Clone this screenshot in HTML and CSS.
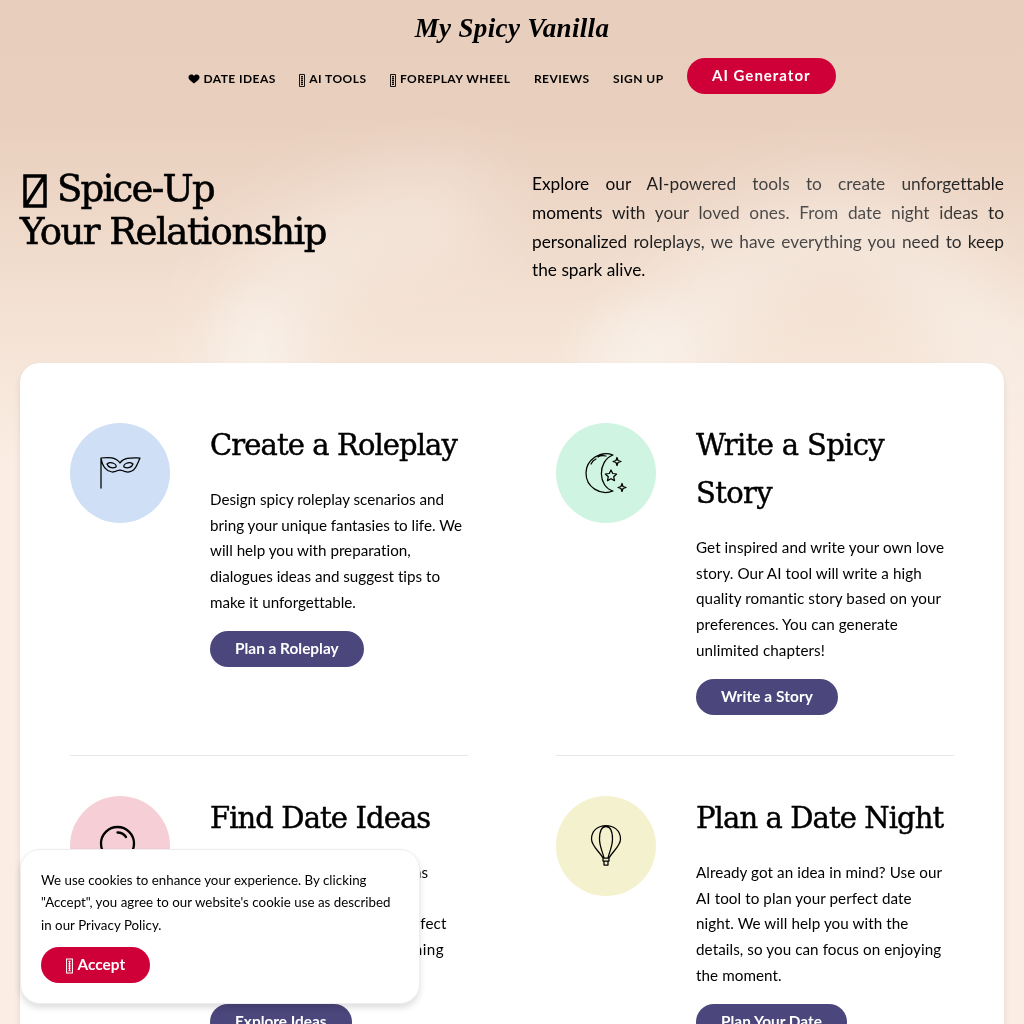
FILE: index.html
```html
<!DOCTYPE html>
<html lang="en">
<head>
<meta charset="utf-8">
<title>My Spicy Vanilla</title>
<link rel="stylesheet" href="styles.css">
</head>
<body>
<svg class="defs" width="0" height="0" aria-hidden="true">
  <symbol id="glyph" viewBox="0 0 6 13"><path d="M.5.5h5v12h-5zM2 2.5h2M2 4.5h2M2 6.5h2M2 8.5h2M2 10.5h2M3 2v9" fill="none" stroke="currentColor" stroke-width=".9"/></symbol>
</svg>
<header class="site-header">
  <a class="logo">My Spicy Vanilla</a>
  <nav class="nav">
    <a><svg class="heart" viewBox="0 0 12 10"><path d="M6 9.500C3.500 7.200.5 6 .5 3.200.5.3 4.500-.3 6 2.100 7.500-.3 11.500.3 11.500 3.200 11.500 6 8.500 7.200 6 9.500z"/></svg>DATE IDEAS</a>
    <a><svg class="glyph"><use href="#glyph"/></svg>AI TOOLS</a>
    <a><svg class="glyph"><use href="#glyph"/></svg>FOREPLAY WHEEL</a>
    <a>REVIEWS</a>
    <a>SIGN UP</a>
    <a class="button red nav-button">AI Generator</a>
  </nav>
</header>
<section class="hero">
  <svg class="haze" viewBox="0 0 1024 500" aria-hidden="true">
    <defs><filter id="soft" x="-50%" y="-50%" width="200%" height="200%"><feGaussianBlur stdDeviation="34"/></filter>
    <filter id="fine" x="-80%" y="-50%" width="260%" height="200%"><feGaussianBlur stdDeviation="20"/></filter></defs>
    <g fill="none" stroke="#fff" filter="url(#soft)">
      <path d="M250 400C245 280 330 220 480 205" stroke-width="95" opacity=".3"/>
      <path d="M620 400C690 320 740 235 840 225C900 230 960 300 1050 400" stroke-width="85" opacity=".32"/>
    </g>
    <g fill="#fff" filter="url(#fine)"><ellipse cx="258" cy="355" rx="35" ry="60" opacity=".22"/><ellipse cx="640" cy="355" rx="60" ry="55" opacity=".2"/></g>
  </svg>
  <h1><svg class="missing" viewBox="0 0 24 34"><path d="M2 2h20v30H2zM3 31L21 3" fill="none" stroke="#000" stroke-width="3.500"/></svg><span class="t1">Spice-Up</span><br><span class="t2">Your Relationship</span></h1>
  <p>Explore our AI-powered tools to create unforgettable moments with your loved ones. From date night ideas to personalized roleplays, we have everything you need to keep the spark alive.</p>
</section>
<main class="panel">
  <article class="tool">
    <div class="icon blue"><svg viewBox="0 0 100 100"><path d="M31 35V65M31 35C39 34 46 34 50 40C54 34 62 35 70 35C67 42 65 49 58 49C53 49 53 47 50 47C47 47 47 49 42 49C35 48 32 42 31 35zM37 41C41 38 47 41 46 44C42 46 38 44 37 41zM63 41C59 38 53 41 54 44C58 46 62 44 63 41z"/></svg></div>
    <div class="body"><h2>Create a Roleplay</h2>
      <p>Design spicy roleplay scenarios and<br>bring your unique fantasies to life. We<br>will help you with preparation,<br>dialogues ideas and suggest tips to<br>make it unforgettable.</p>
      <a class="button">Plan a Roleplay</a></div>
  </article>
  <article class="tool">
    <div class="icon green"><svg viewBox="0 0 100 100"><path d="M57 32C44 27 30 37 30 50C30 64 44 73 57 68C42 64 41 38 57 32zM35 41Q37 37 40 36M42 34Q45 32 50 33M55 47l1.700 3.500 3.900.5-2.900 2.700.8 3.900-3.500-1.900-3.500 1.900.8-3.900-2.900-2.700 3.900-.5zM61 34.500l1 3 3 1-3 1-1 3-1-3-3-1 3-1zM66 60.500l1 3 3 1-3 1-1 3-1-3-3-1 3-1z"/></svg></div>
    <div class="body wide"><h2 class="loose">Write a Spicy<br>Story</h2>
      <p>Get inspired and write your own love<br>story. Our AI tool will write a high<br>quality romantic story based on your<br>preferences. You can generate<br>unlimited chapters!</p>
      <a class="button story">Write a Story</a></div>
  </article>
  <article class="tool">
    <div class="icon pink"><svg class="bold" viewBox="0 0 100 100"><circle cx="47.500" cy="47.500" r="16.500"/><path d="M47.500 36.500Q53 36.500 56 41M59 60L70 71"/></svg></div>
    <div class="body"><h2>Find Date Ideas</h2>
      <p><span class="snug">Looking for new date inspirations</span><br>to try? Answer a few<br><span class="airy">questions and get the most perfect</span><br><span class="airy">date ideas for a romantic evening</span><br>together.</p>
      <a class="button">Explore Ideas</a></div>
  </article>
  <article class="tool">
    <div class="icon yellow"><svg viewBox="0 0 100 100"><path d="M47 62C43 55 35.500 50 35.500 43C35.500 25 64.500 25 64.500 43C64.500 50 57 55 53 62zM48 62C46 54 43.500 50 43.500 43C43.500 35 46 30.500 50 30.500S56.500 35 56.500 43C56.500 50 54 54 52 62M47 62h6v3h-6zM48 65v4h4v-4M48 69h4"/></svg></div>
    <div class="body wide"><h2>Plan a Date Night</h2>
      <p>Already got an idea in mind? Use our<br>AI tool to plan your perfect date<br>night. We will help you with the<br>details, so you can focus on enjoying<br>the moment.</p>
      <a class="button">Plan Your Date</a></div>
  </article>
</main>
<aside class="cookie">
  <p>We use cookies to enhance your experience. By clicking<br>"Accept", you agree to our website's cookie use as described<br>in our Privacy Policy.</p>
  <a class="button red"><svg class="glyph"><use href="#glyph"/></svg>Accept</a>
</aside>
</body>
</html>
```
FILE: styles.css
```css
* { box-sizing: border-box; }
html { height: 100%; overflow: hidden; }
body {
  margin: 0; height: 1024px; overflow: hidden; position: relative;
  font-family: Lato, sans-serif; color: #000; font-variant-ligatures: none;
  background: linear-gradient(#e8cebc 0, #e9cfbd 120px, #f4e3d5 330px, #fbede3 460px, #fbede3);
}
.defs { position: absolute; }
h1, h2, p { margin: 0; font-weight: 400; }
.site-header { height: 110px; display: flex; flex-direction: column; align-items: center; }
.logo {
  height: 58px; white-space: nowrap;
  font: italic 700 27px/56px "Liberation Serif", serif; letter-spacing: .35px;
}
.nav { display: flex; align-items: center; gap: 23.500px; height: 36px; }
.nav > a { font-size: 12px; font-weight: 700; letter-spacing: .45px; white-space: nowrap; padding-top: 5px; display: flex; align-items: center; }
.heart { width: 12px; height: 10px; margin-right: 3px; }
.glyph { width: 6px; height: 13px; margin-right: 4px; flex: none; position: relative; top: 2px; }
.button {
  display: inline-flex; align-items: center; height: 36px; padding: 0 25px 2px; border-radius: 18px;
  background: #4b467c; color: #fff; font-size: 15.400px; font-weight: 700; white-space: nowrap;
}
.story { letter-spacing: .1px; }
.red { background: #cf0037; }
.cookie .glyph { height: 16px; width: 7px; margin-right: 4.500px; }
.nav > .nav-button { padding: 0 25px 2px; font-size: 15px; font-weight: 700; letter-spacing: 1px; }
.hero { height: 253px; padding: 57px 20px 0; display: grid; grid-template-columns: 472px 472px; gap: 40px; }
.haze { position: absolute; left: 0; top: 0; width: 1024px; height: 500px; z-index: -1; }
.hero h1 { font: 400 37px/43px "DejaVu Serif", serif; white-space: nowrap; -webkit-text-stroke: .6px #000; }
.t1 { letter-spacing: -1.750px; }
.t2 { letter-spacing: -1.500px; }
.missing { width: 24px; height: 34px; margin: 0 10px 0 3px; vertical-align: -7px; }
.hero p {
  padding-top: 3px; font-size: 17.300px; line-height: 28.800px; text-align: justify;
  color: transparent; -webkit-background-clip: text; background-clip: text;
  background-image: radial-gradient(ellipse 250px 75px at 285px 50px, #505050 0, #444 45%, #000 100%);
}
.panel {
  margin: 0 20px; height: 760px; padding: 20px 50px; background: #fff; border-radius: 20px;
  box-shadow: 0 4px 6px rgba(0,0,0,.1);
  display: grid; grid-template-columns: 398px 398px; grid-template-rows: 373px 373px; column-gap: 88px;
}
.tool { display: flex; gap: 40px; padding-top: 40px; border-bottom: 1px solid #e8e8e8; }
.icon { width: 100px; height: 100px; border-radius: 50%; flex: none; }
.icon svg { display: block; width: 100px; height: 100px; fill: none; stroke: #000; stroke-width: 1.250; stroke-linejoin: round; stroke-linecap: round; }
.icon .bold { stroke-width: 2.300; }
.blue { background: #cfdff5; }
.green { background: #d0f4e2; }
.pink { background: #f5cfd5; }
.yellow { background: #f4f1cf; }
.body { width: 258px; margin-top: -2px; white-space: nowrap; }
h2 { font: 400 29px/48px "DejaVu Serif", serif; letter-spacing: -.9px; -webkit-text-stroke: .45px #000; }
.loose { letter-spacing: -.65px; }
.body p { margin: 18px 0 16px; font-size: 15.200px; line-height: 25.700px; height: 128px; }
.wide p { letter-spacing: .08px; }
.snug { letter-spacing: -.08px; }
.airy { letter-spacing: .12px; }
.airy:last-of-type { letter-spacing: .42px; }
.cookie {
  position: fixed; left: 20px; top: 849px; width: 400px; height: 155px; padding: 20px;
  background: #fff; border: 1px solid #eee; border-radius: 20px; box-shadow: 0 4px 6px rgba(0,0,0,.13);
}
.cookie p { font-size: 13.300px; letter-spacing: .03px; line-height: 22.400px; white-space: nowrap; margin: -1px 0 11px; }
```
